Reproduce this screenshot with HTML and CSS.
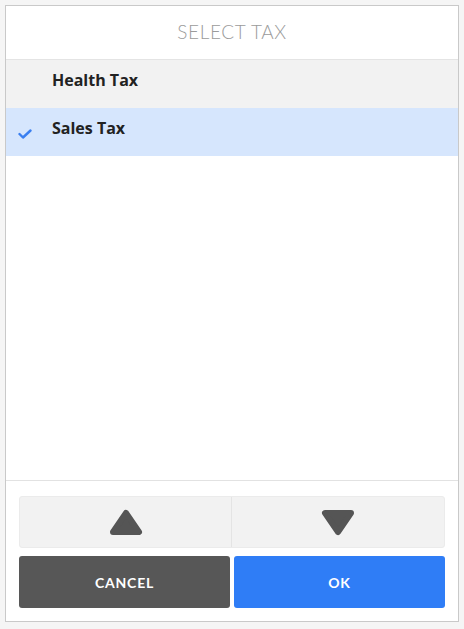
FILE: index.html
```html
<!DOCTYPE html>
<html lang="en">
<head>
    <meta charset="UTF-8">
    <title>Select Tax</title>
    <link rel="stylesheet" href="styles.css">
</head>
<body>
    <div class="dialog">
        <div class="dialog-header">SELECT TAX</div>
        <ul class="tax-list">
            <li class="tax-row">
                <span class="tax-check"></span>
                <span class="tax-name">Health Tax</span>
            </li>
            <li class="tax-row selected">
                <span class="tax-check">
                    <svg width="14" height="10" viewBox="0 0 14 10"><polyline points="1.5,5 5,8.5 12.5,1.5" fill="none" stroke="#3a7ff0" stroke-width="2.4" stroke-linecap="round" stroke-linejoin="round"/></svg>
                </span>
                <span class="tax-name">Sales Tax</span>
            </li>
        </ul>
        <div class="dialog-footer">
            <div class="scroll-btns">
                <button class="scroll-btn" type="button">
                    <svg width="34" height="27" viewBox="0 0 34 27"><polygon points="4,23 17,4 30,23" fill="#555" stroke="#555" stroke-width="6" stroke-linejoin="round"/></svg>
                </button>
                <button class="scroll-btn" type="button">
                    <svg width="34" height="27" viewBox="0 0 34 27"><polygon points="4,4 30,4 17,23" fill="#555" stroke="#555" stroke-width="6" stroke-linejoin="round"/></svg>
                </button>
            </div>
            <div class="action-btns">
                <button class="btn btn-cancel" type="button">CANCEL</button>
                <button class="btn btn-ok" type="button">OK</button>
            </div>
        </div>
    </div>
</body>
</html>
```

FILE: styles.css
```css
body {
    margin: 0;
    background: #f5f5f5;
    font-family: 'Lato', 'Open Sans', Arial, sans-serif;
}
.dialog {
    box-sizing: border-box;
    width: 454px;
    height: 617px;
    margin: 5px;
    background: #fff;
    border: 1px solid #c9c9c9;
    display: flex;
    flex-direction: column;
}
.dialog-header {
    height: 54px;
    border-bottom: 1px solid #e4e4e4;
    display: flex;
    align-items: center;
    justify-content: center;
    font-size: 19px;
    font-weight: 300;
    color: #9b9b9b;
    letter-spacing: 0.6px;
    padding-bottom: 2px;
    box-sizing: border-box;
}
.tax-list {
    list-style: none;
    margin: 0;
    padding: 0;
    flex: 1;
}
.tax-row {
    height: 48px;
    box-sizing: border-box;
    padding-top: 10px;
    background: #f2f2f2;
    display: flex;
    align-items: flex-start;
}
.tax-row.selected {
    background: #d6e6fd;
}
.tax-check {
    width: 46px;
    height: 20px;
    display: flex;
    justify-content: flex-end;
    align-items: flex-end;
    padding-right: 20px;
    box-sizing: border-box;
}
.tax-check svg {
    margin-bottom: -1px;
}
.tax-name {
    font-family: 'Open Sans', 'Lato', Arial, sans-serif;
    font-size: 16px;
    line-height: 20px;
    font-weight: 700;
    color: #222;
}
.dialog-footer {
    border-top: 1px solid #e2e2e2;
    padding: 15px 13px 13px 13px;
    display: flex;
    flex-direction: column;
    gap: 8px;
}
.scroll-btns {
    display: grid;
    grid-template-columns: 1fr 1fr;
    height: 52px;
    background: #f2f2f2;
    border: 1px solid #ebebeb;
    border-radius: 3px;
    box-sizing: border-box;
}
.scroll-btn {
    border: none;
    background: none;
    padding: 0;
    display: flex;
    align-items: center;
    justify-content: center;
}
.scroll-btn:first-child {
    border-right: 1px solid #e4e4e4;
}
.action-btns {
    display: grid;
    grid-template-columns: 1fr 1fr;
    gap: 4px;
}
.btn {
    height: 52px;
    border: none;
    border-radius: 3px;
    color: #fff;
    font-family: 'Lato', 'Open Sans', Arial, sans-serif;
    font-size: 14px;
    font-weight: 700;
    letter-spacing: 0.8px;
}
.btn-cancel {
    background: #575757;
}
.btn-ok {
    background: #2f7df6;
}
```
